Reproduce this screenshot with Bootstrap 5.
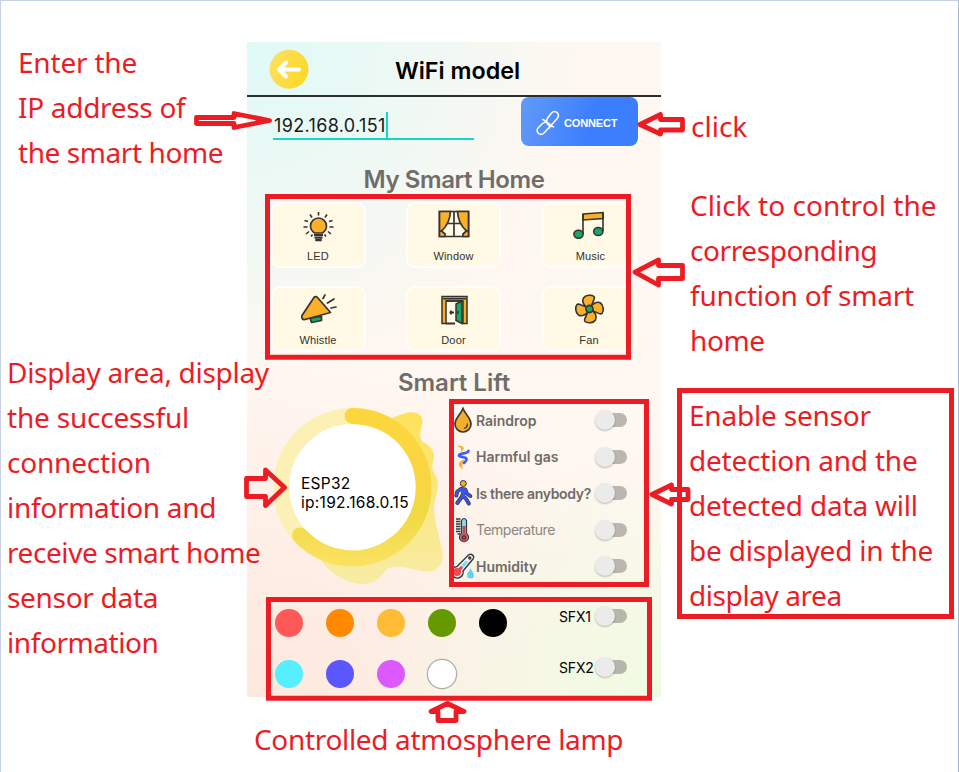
<!DOCTYPE html>
<html lang="en">
<head>
<meta charset="utf-8">
<title>WiFi model</title>
<meta name="viewport" content="width=device-width, initial-scale=1">
<link href="https://cdn.jsdelivr.net/npm/bootstrap@5.3.0/dist/css/bootstrap.min.css" rel="stylesheet">
<style>
body{background:#fff;font-family:Inter,"Noto Sans",sans-serif;color:#000;overflow:hidden}
.sheet{width:959px;height:772px;border:1px solid #c6d0e6;border-bottom:0;border-right-color:#a9bbd0;padding-top:41px}
.side-left{width:246px;flex:none}
.side-right{width:297px;flex:none}
.note{font-family:"Noto Sans","Open Sans",sans-serif;font-size:28px;line-height:45px;color:#ed1c24;white-space:nowrap;position:relative;z-index:3;margin:0;letter-spacing:-.2px}
.note .t3{letter-spacing:-.3px}
.note .t4{letter-spacing:-.42px}
.note .t0{letter-spacing:.05px}
.note-ip{margin:-2px 0 0 17px}
.note-display{margin:175px 0 0 6px}
.note-click{margin:62px 0 0 30px;letter-spacing:0}
.note-control{margin:34px 0 0 29px}
.note-enable{margin:30px 0 0 28px}
.note-lamp{margin:20px 0 0 253px;letter-spacing:-.33px}
.phone{width:414px;height:655px;flex:none;background:
 radial-gradient(ellipse 80% 50% at 0 0,#defaf7 0,#defaf700 100%),
 radial-gradient(ellipse 70% 38% at 100% 100%,#effbe1 0,#effbe100 100%),
 radial-gradient(ellipse 110% 52% at 0 100%,#fde8dd 0,#fde8dd00 100%),
 #fff7f1}
.bar{height:55px;border-bottom:2px solid #2b2e2e;padding-left:22px}
.bar h1{font-size:23.3px;font-weight:600;margin:5px 0 0 86px}
.ip-field{width:201px;height:43px;margin-left:26px;border-bottom:2px solid #12d9c4;font-size:18px;letter-spacing:.35px;color:#181818;padding-top:15px}
.ip-text{margin-left:1px}
.caret{width:2px;height:26px;background:#12d9c4}
.btn-connect{width:117px;height:49px;margin-left:47px;border:0;border-radius:8px;padding:2px 0 0 15px;background:linear-gradient(105deg,#6399f7 0,#3b7fff 60%);color:#fff;font:bold 11px "Liberation Sans",Arial,sans-serif;letter-spacing:-.15px;gap:4px}
.section-name{font-size:24px;font-weight:600;color:#6f6d6a;line-height:30px;margin:0;text-align:center}
.home-name{padding-top:19px;height:56px;letter-spacing:-.4px}
.lift-name{padding-top:16px;height:50px}
.tiles{display:grid;grid-template-columns:repeat(3,95px);column-gap:40.5px;row-gap:18px;margin-left:23.5px}
.tile{height:66px;border:2px solid #fffefa;border-radius:9px;background:#fff9e6;font:11px/14px "Liberation Sans",Arial,sans-serif;letter-spacing:.15px;color:#33322f}
.tile svg{width:40px;height:34px;margin-top:6px}
.tile span{margin-top:5px}
.tile-music svg,.tile-music span{margin-left:3px}
.lift{height:196.5px}
.gauge{width:175px;height:186px;margin:-1px 0 0 26px;position:relative}
.gauge p{position:absolute;left:28px;top:73px;font-size:15.5px;letter-spacing:.28px;line-height:19px;margin:0;white-space:nowrap}
.sensors{margin:0 0 0 4px}
.sensor{height:36.5px;font-size:14px;font-weight:600;color:#6f6b68}
.sensor svg{width:24px;height:26px;flex:none}
.sensor .txt{width:119px;white-space:nowrap}
.sensor .txt-tight{letter-spacing:-.33px}
.sensor .txt-light{font-weight:400;color:#8a8683;letter-spacing:-.5px}
.knob{width:33px;height:20px;display:flex;align-items:center;position:relative;flex:none}
.knob::before{content:"";width:24px;height:14px;border-radius:7px;background:#bbb6b0;margin-left:8px}
.knob::after{content:"";position:absolute;left:0;top:0;width:20px;height:20px;border-radius:50%;background:#ebebeb;box-shadow:0 1px 2px #0004}
.lamps{display:grid;grid-template-columns:repeat(5,28px);gap:23px;margin:10px 0 0 28px;align-content:start}
.lamp{width:28px;height:28px;border-radius:50%}
.lamp-white{background:#fff;box-shadow:0 0 0 1.3px #b0adab}
.sfx-list{margin:-8px 0 0 52px}
.sfx{font-size:14px;letter-spacing:-.15px;height:51px}
.sfx span{width:36px}
.sfx .knob::before{background:#b5b7aa}
.marks{position:absolute;left:-1px;top:-1px;width:959px;height:772px;z-index:2;pointer-events:none}
</style>
<script src="https://cdn.jsdelivr.net/npm/bootstrap@5.3.0/dist/js/bootstrap.bundle.min.js"></script>
</head>
<body>
<div class="sheet position-relative">
 <div class="d-flex">
  <div class="side-left">
   <p class="note note-ip"><span>Enter the</span><br><span class="t3">IP address of</span><br><span class="t4">the smart home</span></p>
   <p class="note note-display"><span class="t3">Display area, display</span><br>the successful<br>connection<br><span class="t3">information and</span><br><span class="t4">receive smart home</span><br><span class="t3">sensor data</span><br><span class="t4">information</span></p>
  </div>
  <main class="phone">
   <header class="bar d-flex align-items-center">
    <svg width="40" height="40" viewBox="0 0 40 40"><defs><linearGradient id="y" x2="1" y2=".4"><stop stop-color="#fde06a"/><stop offset="1" stop-color="#fdd929"/></linearGradient></defs><circle cx="20" cy="20.300" r="19.500" fill="url(#y)"/><path d="M30 20.500H11M17 13.500L10 20.500L17 27.500" fill="none" stroke="#fff" stroke-width="4" stroke-linecap="round" stroke-linejoin="round"/></svg>
    <h1>WiFi model</h1>
   </header>
   <div class="d-flex">
    <div class="ip-field d-flex"><span class="ip-text">192.168.0.151</span><i class="caret"></i></div>
    <button class="btn-connect d-flex align-items-center" type="button">
     <svg width="24" height="26" viewBox="0 0 24 26" fill="none" stroke="#fff" stroke-width="1.500" stroke-linecap="round"><path d="M15.500 16.500C11.500 16 9 11.500 12 7.500L15.500 3C17.300 1 19.700 1 21.300 2.800C22.900 4.600 22.600 7 21 8.800L8.500 22.500C6.500 24.700 4 25 2.300 23.200C.7 21.500 1 19 2.700 17.300L6.500 13.500C10 10.500 14 13 13.500 18M6.500 9.500C8.500 9.500 13 14 17.500 17"/></svg>
     <span>CONNECT</span>
    </button>
   </div>
   <h2 class="section-name home-name">My Smart Home</h2>
   <div class="tiles">
    <div class="tile d-flex flex-column align-items-center">
     <svg viewBox="0 0 40 34" fill="none" stroke="#35332f" stroke-width="1.600"><path d="M20.500 2V5.500M12 4.500L14 7.500M29 4.500L27 7.500M6.500 10.500L10 11.500M34.500 10.500L31 11.500M5.500 17H9.500M35.500 17H31.500M8 24L11 21.500M33 24L30 21.500M13 26.500L14.500 24.500M28 26.500L26.500 24.500"/><path d="M16.500 23C13.500 21 12.500 18.500 12.500 16A8 8 0 0 1 28.500 16C28.500 18.500 27.500 21 24.500 23Z" fill="#fbb02a"/><path d="M16 25H25M16.500 27.700H24.500M17.300 30.200H23.700" stroke-width="2.200"/></svg><span>LED</span></div>
    <div class="tile d-flex flex-column align-items-center">
     <svg viewBox="0 0 40 34" fill="none" stroke="#35332f" stroke-width="1.700"><path d="M5.500 1.500H34.500V26.500H5.500Z" fill="#fff9e6"/><path d="M20 1.500V26.500M13 13.500H27"/><path d="M5.500 1.500H16.500C16 10 12 17 7.500 21L11 24V26.500H5.500ZM34.500 1.500H23.500C24 10 28 17 32.500 21L29 24V26.500H34.500Z" fill="#fbb02a"/><path d="M5.500 21H7.500M34.500 21H32.500"/></svg><span>Window</span></div>
    <div class="tile tile-music d-flex flex-column align-items-center">
     <svg viewBox="0 0 40 34" fill="none" stroke="#35332f" stroke-width="1.600"><path d="M12 4L32 2.500V8.500L12 10Z" fill="#fbb02a"/><path d="M12 24V4M32 21V3"/><ellipse cx="7.500" cy="24.300" rx="4.600" ry="4" fill="#17a869"/><ellipse cx="27.300" cy="21.500" rx="4.600" ry="4" fill="#17a869"/></svg><span>Music</span></div>
    <div class="tile d-flex flex-column align-items-center">
     <svg viewBox="0 0 40 34" fill="none" stroke="#35332f" stroke-width="1.700" stroke-linejoin="round" stroke-linecap="round"><path d="M12 24L13.500 28.500L23.500 26.500L23.500 22.500Z" fill="#17a869"/><path d="M16 3.500C17 2 18.500 2.500 19.500 3.500L32.500 18.500L7 25.500C4.500 26 3 24 4 21.500Z" fill="#fbb02a"/><path d="M25 4.500L27 .9M29.500 9L36 5M33 14L38 13"/></svg><span>Whistle</span></div>
    <div class="tile d-flex flex-column align-items-center">
     <svg viewBox="0 0 40 34" fill="none" stroke="#35332f" stroke-width="1.500"><path d="M8 2.500H33V29.500H29V7H12V29.500H8Z" fill="#fbb02a"/><path d="M12 7H29M9 4.700H32"/><path d="M15.500 18.500H20M17 16.500V20.500M12 29.500H21" stroke-width="1.800"/><path d="M28 7L22 10V26.500L28 29.500Z" fill="#17a869"/><path d="M23.800 17V20"/></svg><span>Door</span></div>
    <div class="tile d-flex flex-column align-items-center">
     <svg viewBox="0 0 40 34" fill="#fbb02a" stroke="#35332f" stroke-width="1.600"><path id="blade" d="M19 14.500C15 12 12.500 7.500 14.500 4C16.500 .8 22.500 .5 25 2.500C27 5 22.500 8 22.500 13Z"/><use href="#blade" transform="rotate(90 20.500 15)"/><use href="#blade" transform="rotate(180 20.500 15)"/><use href="#blade" transform="rotate(270 20.500 15)"/><circle cx="20.500" cy="15" r="3.600" fill="#17a869"/></svg><span>Fan</span></div>
   </div>
   <h2 class="section-name lift-name">Smart Lift</h2>
   <div class="d-flex lift">
    <div class="gauge">
     <svg width="175" height="186" viewBox="273 400 175 186"><defs><linearGradient id="b" x1="0" y1="0" x2="0" y2="1"><stop stop-color="#fde25a"/><stop offset="1" stop-color="#f8eca6"/></linearGradient><linearGradient id="r" gradientUnits="userSpaceOnUse" x1="0" y1="410" x2="0" y2="560"><stop stop-color="#fdd63d"/><stop offset=".45" stop-color="#f8d642"/><stop offset=".7" stop-color="#f0da43"/><stop offset="1" stop-color="#fae160"/></linearGradient></defs>
      <path d="M385 419C394 417 401 413 408 411.500C417 410 423 414 422.500 421C421 430 418 437 423 441C430 445 436 450 433.500 459C431 469 433 471 436.500 476C441 486 434 498 434 507C434 522 440 535 442.500 552C444 563 437 571 427 570.500C411 569 402 563 388 567C382 574 376 582 367 583C347 584 331 573 321 559L352 530Z" fill="url(#b)"/>
      <circle cx="352.500" cy="486.200" r="71.300" fill="#fff" stroke="#fdf0b4" stroke-width="16"/>
      <path d="M352.500 414.900A71.300 71.300 0 1 1 300 534.500" fill="none" stroke="url(#r)" stroke-width="16" stroke-linecap="round"/></svg>
     <p>ESP32<br>ip:192.168.0.15</p>
    </div>
    <div class="sensors">
     <div class="sensor d-flex align-items-center"><svg viewBox="0 0 24 26"><path d="M11 1.500C9 7 3 11 3 17A8 8 0 0 0 19 17C19 11 13 7 11 1.500Z" fill="#f7ad2c" stroke="#3a3834" stroke-width="1.700"/><path d="M15.500 16.500Q15.500 20.500 12 21.500" fill="none" stroke="#3a3834" stroke-width="1.300"/></svg><span class="txt">Raindrop</span><i class="knob"></i></div>
     <div class="sensor d-flex align-items-center"><svg viewBox="0 0 24 26" fill="none" stroke-linecap="round"><path d="M6.500 2.200C11 2 13 3.500 9.500 7.500C10 5 9.500 3.500 6.500 2.200ZM10 24C5 20.500 7.500 18 11.500 16C10 19 9 20.500 10 24Z" fill="#f7ad2c" stroke="#f7ad2c"/><path d="M16.500 7C15 10.500 8 8.500 7 11.500C8 14 14 12 14.500 15C14.500 17 13 18 12 19" stroke="#3e60f5" stroke-width="2.800" stroke-linejoin="round"/></svg><span class="txt">Harmful gas</span><i class="knob"></i></div>
     <div class="sensor d-flex align-items-center"><svg viewBox="0 0 24 26"><g transform="translate(-1.200 -.5)"><path d="M10 9.500L14.500 10L16 14L19.500 16.500M10 9.500L6.500 12L5.500 16M12.500 11L11.500 16.500L6.500 23.500M12 16.500L15 19L18 24" fill="none" stroke="#343640" stroke-width="3.900" stroke-linecap="round" stroke-linejoin="round"/><path d="M10 9.500L14.500 10L16 14L19.500 16.500M10 9.500L6.500 12L5.500 16M12.500 11L11.500 16.500L6.500 23.500M12 16.500L15 19L18 24" fill="none" stroke="#3e55ea" stroke-width="2.300" stroke-linecap="round" stroke-linejoin="round"/><path d="M10 9L15 10L13.500 17H11Z" fill="#3e55ea"/><circle cx="12.500" cy="4" r="3" fill="#f7ad2c" stroke="#343640"/></g></svg><span class="txt txt-tight">Is there anybody?</span><i class="knob"></i></div>
     <div class="sensor d-flex align-items-center"><svg viewBox="0 0 24 26" fill="none" stroke="#35383c" stroke-width="1.200"><path d="M4 2H8.500M4 4.500H8.500M4 7H8.500M4 9.500H8.500M4 12H8.500M4 14.500H8.500M5.500 17H8.500" stroke-width="1.400"/><path d="M9.500 16.500V3.500Q12 -.5 14.500 3.500V16.500A4.500 4.500 0 1 1 9.500 16.500Z" fill="#7fe2f2"/><path d="M12 9V18" stroke="#c24b50" stroke-width="3"/><circle cx="12" cy="20.500" r="3.700" fill="#dd4b53" stroke="none"/><circle cx="12" cy="20.500" r="1.700"/></svg><span class="txt txt-light">Temperature</span><i class="knob"></i></div>
     <div class="sensor d-flex align-items-center"><svg viewBox="0 0 24 26" fill="none" stroke="#35383c" stroke-width="1.400"><path d="M5 13.500L16.500 2C19.500 0 23 3 21 6L11 18A5.800 5.800 0 1 1 5 13.500Z" fill="#f4f4f4"/><path d="M8 16L15 8.500" stroke="#7fdcf2" stroke-width="3"/><circle cx="5" cy="19" r="4" fill="#f34750" stroke="none"/><path d="M7 17L10 14" stroke="#f34750" stroke-width="3"/><circle cx="17.800" cy="5" r="1"/><path d="M18.500 15C17.500 18 15 19.500 15 22A3.500 3.500 0 0 0 22 22C22 19.500 19.500 18 18.500 15Z" fill="#5ed4f5" stroke="none"/></svg><span class="txt">Humidity</span><i class="knob"></i></div>
    </div>
   </div>
   <div class="d-flex">
    <div class="lamps">
     <i class="lamp" style="background:#ff5858"></i><i class="lamp" style="background:#ff8900"></i><i class="lamp" style="background:#ffbb33"></i><i class="lamp" style="background:#669900"></i><i class="lamp" style="background:#000"></i>
     <i class="lamp" style="background:#55efff"></i><i class="lamp" style="background:#5b57ff"></i><i class="lamp" style="background:#dc58ff"></i><i class="lamp lamp-white"></i>
    </div>
    <div class="sfx-list">
     <div class="sfx d-flex align-items-center"><span>SFX1</span><i class="knob"></i></div>
     <div class="sfx d-flex align-items-center"><span>SFX2</span><i class="knob"></i></div>
    </div>
   </div>
  </main>
  <div class="side-right">
   <p class="note note-click">click</p>
   <p class="note note-control"><span class="t0">Click to control the</span><br><span class="t4">corresponding</span><br>function of smart<br><span class="t4">home</span></p>
   <p class="note note-enable">Enable sensor<br>detection and the<br>detected data will<br>be displayed in the<br><span class="t4">display area</span></p>
  </div>
 </div>
 <p class="note note-lamp">Controlled atmosphere lamp</p>
 <svg class="marks" viewBox="0 0 959 772" fill="none" stroke="#ed1c24" stroke-width="5">
  <path d="M267.500 196.500H628.500V357.200H267.500ZM451.500 401.500H646.500V584.500H451.500ZM268.500 599.500H649.500V698.200H268.500ZM679.500 390.500H951.500V616.500H679.500Z"/>
  <g stroke-width="4.800" stroke-linejoin="round">
   <path d="M196.500 117.500H234V113.500L269.500 120.500L234 127.500V123.500H196.500Z"/>
   <path d="M682.500 119.500H660.500V114.500L640 124.500L660.500 134V130H682.500Z"/>
   <path d="M682.500 265.500H658.500V260L635 272.200L658.500 285V278.500H682.500Z"/>
   <path d="M246.500 478.500H265.500V470L284.500 487.500L265.500 505.500V496.500H246.500Z"/>
   <path d="M688 489.500H671.500V485L652 494.500L671.500 504V499.500H688Z"/>
   <path d="M438 720.500V711.500H431L447.500 703.500L464 711.500H456V720.500Z"/>
  </g>
 </svg>
</div>
</body>
</html>
